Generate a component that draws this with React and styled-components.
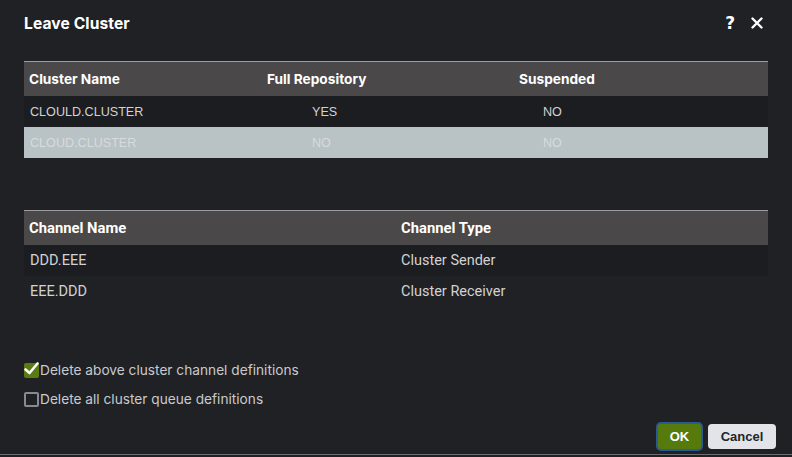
import styled, { createGlobalStyle } from "styled-components";

const GlobalStyle = createGlobalStyle`
  html, body {
    margin: 0;
    padding: 0;
    background: #202125;
  }
`;

const clusters = [
  { name: "CLOULD.CLUSTER", full: "YES", suspended: "NO" },
  { name: "CLOUD.CLUSTER", full: "NO", suspended: "NO", selected: true },
];

const channels = [
  { name: "DDD.EEE", type: "Cluster Sender" },
  { name: "EEE.DDD", type: "Cluster Receiver" },
];

const CheckIcon = () => (
  <svg width="17" height="14" viewBox="0 0 17 14">
    <path d="M2.5 7.5 L6.5 11 L14.5 1.5" fill="none" stroke="#ffffff" strokeWidth="2.6" strokeLinecap="round" strokeLinejoin="round" />
  </svg>
);

const CloseIcon = () => (
  <svg width="12" height="12" viewBox="0 0 12 12">
    <path d="M1.5 1.5 L10.5 10.5 M10.5 1.5 L1.5 10.5" stroke="#ffffff" strokeWidth="2.4" strokeLinecap="round" />
  </svg>
);

const App = () => {
  return (
    <Dialog>
      <GlobalStyle />
      <TitleBar>
        <Title>Leave Cluster</Title>
        <TitleActions>
          <Help>?</Help>
          <CloseIcon />
        </TitleActions>
      </TitleBar>

      <Table $cols="238px 252px 254px">
        <HeadCell>Cluster Name</HeadCell>
        <HeadCell>Full Repository</HeadCell>
        <HeadCell>Suspended</HeadCell>
        {clusters.map((c, i) => (
          <Row key={c.name} $selected={c.selected} $odd={i % 2 === 0}>
            <Cell $pad={6}>{c.name}</Cell>
            <Cell $pad={50}>{c.full}</Cell>
            <Cell $pad={29}>{c.suspended}</Cell>
          </Row>
        ))}
      </Table>

      <Table $cols="372px 372px" $top={52}>
        <HeadCell $narrow>Channel Name</HeadCell>
        <HeadCell $narrow>Channel Type</HeadCell>
        {channels.map((c, i) => (
          <Row key={c.name} $odd={i % 2 === 0}>
            <Cell $pad={6} $narrow>{c.name}</Cell>
            <Cell $pad={5} $narrow>{c.type}</Cell>
          </Row>
        ))}
      </Table>

      <Options>
        <Option>
          <Box $checked>
            <CheckIcon />
          </Box>
          Delete above cluster channel definitions
        </Option>
        <Option>
          <Box />
          Delete all cluster queue definitions
        </Option>
      </Options>

      <Footer>
        <OkButton>OK</OkButton>
        <CancelButton>Cancel</CancelButton>
      </Footer>
    </Dialog>
  );
};

const Dialog = styled.div`
  width: 792px;
  height: 455px;
  box-sizing: border-box;
  padding: 0 24px;
  display: flex;
  flex-direction: column;
  background: #202125;
  border-bottom: 1px solid #6d6e72;
  font-family: Inter, "Liberation Sans", sans-serif;
`;

const TitleBar = styled.div`
  height: 44px;
  display: flex;
  align-items: center;
  justify-content: space-between;
`;

const Title = styled.div`
  color: #ffffff;
  font-size: 15.6px;
  font-weight: 700;
  letter-spacing: 0.1px;
  margin-top: 2px;
`;

const TitleActions = styled.div`
  display: flex;
  align-items: center;
  gap: 16px;
  margin-right: 5px;
  margin-top: 2px;
`;

const Help = styled.span`
  color: #ffffff;
  font-size: 17px;
  font-weight: 700;
  line-height: 1;
  font-family: "DejaVu Sans", sans-serif;
`;

const Table = styled.div`
  display: grid;
  grid-template-columns: ${(p) => p.$cols};
  margin-top: ${(p) => (p.$top !== undefined ? p.$top : 17)}px;
  border-top: 1px solid #9c9c9e;
`;

const HeadCell = styled.div`
  height: 34px;
  display: flex;
  align-items: center;
  padding-left: 5px;
  padding-bottom: 1px;
  box-sizing: border-box;
  background: #4a4848;
  color: #ffffff;
  font-family: ${(p) => (p.$narrow ? "Roboto, sans-serif" : "Inter, sans-serif")};
  font-weight: 700;
  font-size: ${(p) => (p.$narrow ? "14.8px" : "13.7px")};
`;

const Row = styled.div`
  display: contents;
  & > div {
    background: ${(p) => (p.$selected ? "#b9c2c4" : p.$odd ? "#1c1d21" : "#202125")};
    color: ${(p) => (p.$selected ? "#d6dcde" : "#d2d2d4")};
  }
`;

const Cell = styled.div`
  height: 31px;
  display: flex;
  align-items: center;
  padding-left: ${(p) => p.$pad}px;
  font-family: ${(p) => (p.$narrow ? "Roboto, sans-serif" : "'Liberation Sans', Arial, sans-serif")};
  font-size: ${(p) => (p.$narrow ? "14.5px" : "12.6px")};
`;

const Options = styled.div`
  display: flex;
  flex-direction: column;
  gap: 13px;
  margin-top: 55px;
`;

const Option = styled.label`
  display: flex;
  align-items: center;
  height: 16px;
  color: #c9cacd;
  font-family: Inter, sans-serif;
  font-size: 13.7px;
`;

const Box = styled.span`
  position: relative;
  width: 15px;
  height: 15px;
  box-sizing: border-box;
  margin-right: 1px;
  border-radius: 2px;
  background: ${(p) => (p.$checked ? "#5a7a12" : "transparent")};
  border: ${(p) => (p.$checked ? "none" : "2px solid #878a91")};

  svg {
    position: absolute;
    left: -1px;
    top: -1px;
  }
`;

const Footer = styled.div`
  display: flex;
  justify-content: flex-end;
  align-items: center;
  gap: 5px;
  margin-top: auto;
  margin-right: -8px;
  margin-bottom: 3px;
`;

const OkButton = styled.button`
  width: 47px;
  height: 29px;
  box-sizing: border-box;
  border: 2px solid #2c5c8f;
  border-radius: 5px;
  background: #577a0d;
  color: #ffffff;
  font-family: "Liberation Sans", Arial, sans-serif;
  font-weight: 700;
  font-size: 13px;
  padding: 0;
`;

const CancelButton = styled.button`
  width: 68px;
  height: 25px;
  border: none;
  border-radius: 4px;
  background: #e3e4e9;
  color: #22252b;
  font-family: "Liberation Sans", Arial, sans-serif;
  font-weight: 700;
  font-size: 13px;
  padding: 0;
`;

export default App;
